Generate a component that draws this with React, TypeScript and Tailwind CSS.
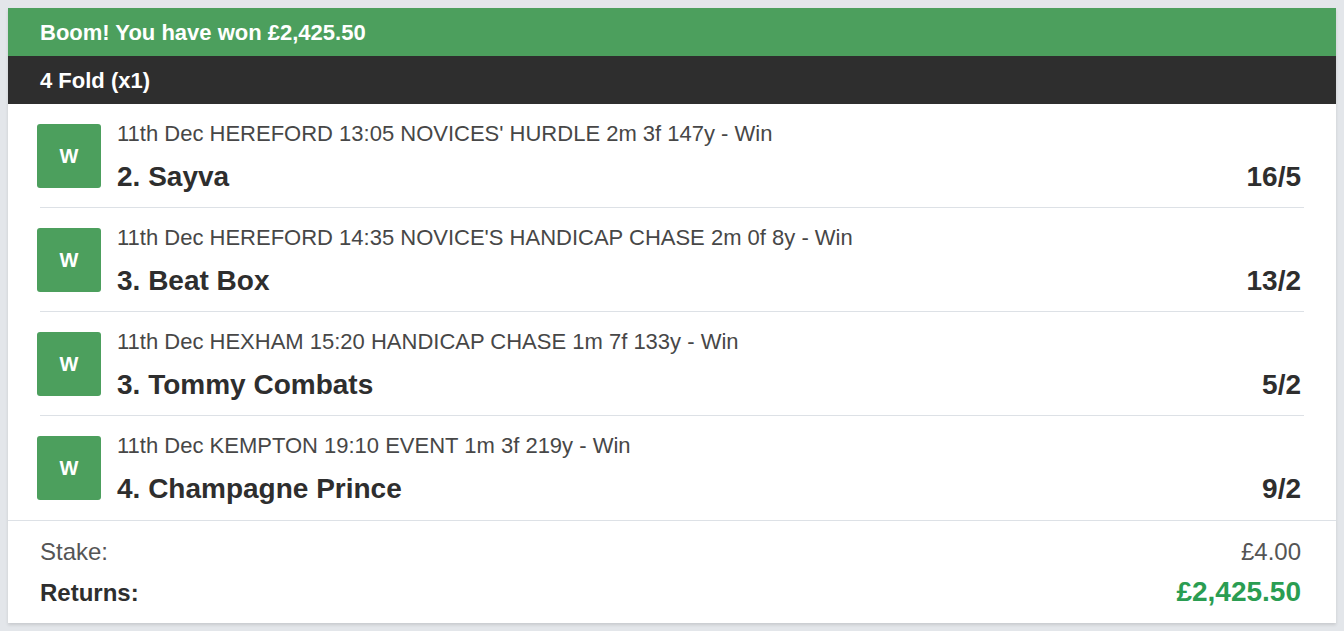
const legs = [
  {
    event: "11th Dec HEREFORD 13:05 NOVICES' HURDLE 2m 3f 147y - Win",
    name: "2. Sayva",
    odds: "16/5",
  },
  {
    event: "11th Dec HEREFORD 14:35 NOVICE'S HANDICAP CHASE 2m 0f 8y - Win",
    name: "3. Beat Box",
    odds: "13/2",
  },
  {
    event: "11th Dec HEXHAM 15:20 HANDICAP CHASE 1m 7f 133y - Win",
    name: "3. Tommy Combats",
    odds: "5/2",
  },
  {
    event: "11th Dec KEMPTON 19:10 EVENT 1m 3f 219y - Win",
    name: "4. Champagne Prince",
    odds: "9/2",
  },
];

function Leg({ event, name, odds, last }: { event: string; name: string; odds: string; last: boolean }) {
  return (
    <div className={last ? "mx-8 pt-5 pb-5" : "mx-8 pt-5 pb-[19px] border-b border-[#dde1e6]"}>
      <div className="flex items-start gap-4 -ml-[3px] mr-[3px]">
        <div className="flex-none size-16 rounded-[3px] bg-[#4c9f5d] flex items-center justify-center text-white font-bold text-[20px]">
          W
        </div>
        <div className="flex-1 flex flex-col gap-[18px] -mt-[1px] -mb-[3px]">
          <div className="text-[22px] leading-[22px] text-[#474747]">{event}</div>
          <div className="flex justify-between items-baseline text-[28px] leading-[28px] font-bold text-[#2e2e2e]">
            <span>{name}</span>
            <span>{odds}</span>
          </div>
        </div>
      </div>
    </div>
  );
}

export default function App() {
  return (
    <div
      className="min-h-[631px] bg-[#e3e6ea] pt-2 px-2"
      style={{ fontFamily: '"Liberation Sans", Arial, sans-serif' }}
    >
      <div className="bg-white shadow-[0_2px_3px_rgba(0,0,0,0.12)]">
        <div className="h-12 flex items-center px-8 bg-[#4c9f5d] text-white font-bold text-[22px]">
          Boom! You have won £2,425.50
        </div>
        <div className="h-12 flex items-center px-8 bg-[#2e2e2e] text-white font-bold text-[22px]">
          4 Fold (x1)
        </div>
        {legs.map((leg, i) => (
          <Leg key={leg.name} {...leg} last={i === legs.length - 1} />
        ))}
        <div className="border-t border-[#dde1e6] px-8 pt-[17px] pb-[17px] flex flex-col gap-3">
          <div className="flex justify-between items-baseline h-7 leading-7 text-[24px] text-[#555]">
            <span>Stake:</span>
            <span className="mr-[3px]">£4.00</span>
          </div>
          <div className="flex justify-between items-baseline h-7 leading-7">
            <span className="text-[24px] font-bold text-[#2e2e2e]">Returns:</span>
            <span className="mr-[3px] text-[28px] font-bold text-[#2a9d52]">£2,425.50</span>
          </div>
        </div>
      </div>
    </div>
  );
}
